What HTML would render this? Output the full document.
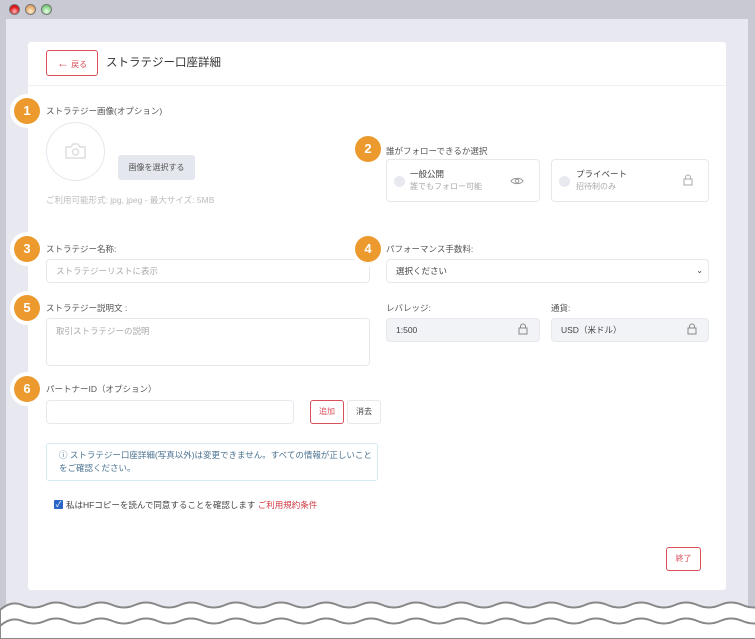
<!DOCTYPE html>
<html><head><meta charset="utf-8"><style>
*{box-sizing:border-box;margin:0;padding:0}
body{width:755px;height:639px;overflow:hidden;background:#fff;font-family:"Liberation Sans","Noto Sans CJK JP",sans-serif;position:relative;color:#333}
.frame{position:absolute;left:0;top:0;width:755px;height:615px;background:#c9c9d3}
.inner{position:absolute;left:6px;top:19px;width:742px;height:600px;background:#e8e8f1}
.dot{position:absolute;top:4px;width:11px;height:11px;border-radius:50%;border:1px solid #777}
.card{position:absolute;left:28px;top:42px;width:698px;height:548px;background:#fff;border-radius:3px}
.hdr{position:absolute;left:0;top:0;width:698px;height:44px;border-bottom:1px solid #f0f0f4}
.abs{position:absolute}
.lbl{position:absolute;font-size:8.5px;color:#555}
.badge{position:absolute;width:26px;height:26px;border-radius:50%;background:#ec9a2e;color:#fff;font-weight:bold;font-size:13px;text-align:center;line-height:26px;box-shadow:0 0 0 4px #fff}
.inp{position:absolute;border:1px solid #e6e8ee;border-radius:4px;background:#fff;font-size:8.5px;color:#aaa;padding-left:9px}
.ro{background:#f1f3f7;color:#444}
</style></head><body>
<div class="frame"></div>
<div class="dot" style="left:9px;background:radial-gradient(circle at 50% 70%,#fbb,#d11 60%)"></div>
<div class="dot" style="left:25px;background:radial-gradient(circle at 50% 70%,#fff0d0,#e0a060 70%)"></div>
<div class="dot" style="left:41px;background:radial-gradient(circle at 50% 70%,#efe,#7c7 70%)"></div>
<div class="inner"></div>
<div class="card">
 <div class="hdr">
  <div class="abs" style="left:18px;top:8px;width:52px;height:26px;border:1px solid #d9505a;border-radius:3px;font-size:8px;color:#d9505a;line-height:24px;text-align:center"><span style="font-size:12px">&larr;</span> 戻る</div>
  <div class="abs" style="left:78px;top:12px;font-size:11.5px;color:#333">ストラテジー口座詳細</div>
 </div>
</div>
<div class="badge" style="left:14px;top:98px">1</div>
<div class="lbl" style="left:46px;top:105px">ストラテジー画像(オプション)</div>
<div class="abs" style="left:46px;top:122px;width:59px;height:59px;border:1px solid #e6e6ee;border-radius:50%"></div>
<svg class="abs" style="left:65px;top:143px" width="21" height="16" viewBox="0 0 21 16"><path d="M1 4h5l2-3h5l2 3h5v11H1z" fill="none" stroke="#ddd" stroke-width="1.5"/><circle cx="10.5" cy="9" r="3" fill="none" stroke="#ddd" stroke-width="1.5"/></svg>
<div class="abs" style="left:118px;top:155px;width:77px;height:25px;background:#e5e7ef;border-radius:3px;font-size:8px;color:#555;text-align:center;line-height:25px">画像を選択する</div>
<div class="lbl" style="left:46px;top:194px;color:#bbb">ご利用可能形式: jpg, jpeg - 最大サイズ: 5MB</div>

<div class="badge" style="left:355px;top:136px">2</div>
<div class="lbl" style="left:386px;top:145px">誰がフォローできるか選択</div>
<div class="inp" style="left:386px;top:159px;width:154px;height:43px"></div>
<div class="abs" style="left:394px;top:176px;width:11px;height:11px;border-radius:50%;background:#e8e9f0"></div>
<div class="abs" style="left:410px;top:168px;font-size:8.5px;color:#444">一般公開</div>
<div class="abs" style="left:410px;top:181px;font-size:8px;color:#aaa">誰でもフォロー可能</div>
<svg class="abs" style="left:510px;top:176px" width="14" height="10" viewBox="0 0 14 10"><path d="M1 5C3 1.5 11 1.5 13 5C11 8.5 3 8.5 1 5z" fill="none" stroke="#999"/><circle cx="7" cy="5" r="1.8" fill="none" stroke="#999"/></svg>
<div class="inp" style="left:551px;top:159px;width:158px;height:43px"></div>
<div class="abs" style="left:559px;top:176px;width:11px;height:11px;border-radius:50%;background:#e8e9f0"></div>
<div class="abs" style="left:576px;top:168px;font-size:8.5px;color:#444">プライベート</div>
<div class="abs" style="left:576px;top:181px;font-size:8px;color:#aaa">招待制のみ</div>
<svg class="abs" style="left:683px;top:174px" width="10" height="12" viewBox="0 0 10 12"><path d="M2.5 5V3.5a2.5 2.5 0 0 1 5 0V5" fill="none" stroke="#aaa"/><rect x="1" y="5" width="8" height="6" fill="none" stroke="#aaa"/></svg>

<div class="badge" style="left:14px;top:236px">3</div>
<div class="lbl" style="left:46px;top:243px">ストラテジー名称:</div>
<div class="inp" style="left:46px;top:259px;width:324px;height:24px;line-height:22px">ストラテジーリストに表示</div>
<div class="badge" style="left:355px;top:236px">4</div>
<div class="lbl" style="left:386px;top:243px">パフォーマンス手数料:</div>
<div class="inp" style="left:386px;top:259px;width:323px;height:24px;line-height:22px;color:#444">選択ください<span style="position:absolute;right:5px;font-size:8px">&#8964;</span></div>

<div class="badge" style="left:14px;top:295px">5</div>
<div class="lbl" style="left:46px;top:302px">ストラテジー説明文 :</div>
<div class="inp" style="left:46px;top:318px;width:324px;height:48px;padding-top:6px">取引ストラテジーの説明</div>
<div class="lbl" style="left:386px;top:302px">レバレッジ:</div>
<div class="inp ro" style="left:386px;top:318px;width:154px;height:24px;line-height:22px">1:500</div>
<div class="lbl" style="left:551px;top:302px">通貨:</div>
<div class="inp ro" style="left:551px;top:318px;width:158px;height:24px;line-height:22px">USD（米ドル）</div>
<svg class="abs" style="left:518px;top:323px" width="10" height="12" viewBox="0 0 10 12"><path d="M2.5 5V3.5a2.5 2.5 0 0 1 5 0V5" fill="none" stroke="#888"/><rect x="1" y="5" width="8" height="6" fill="none" stroke="#888"/></svg>
<svg class="abs" style="left:687px;top:323px" width="10" height="12" viewBox="0 0 10 12"><path d="M2.5 5V3.5a2.5 2.5 0 0 1 5 0V5" fill="none" stroke="#888"/><rect x="1" y="5" width="8" height="6" fill="none" stroke="#888"/></svg>

<div class="badge" style="left:14px;top:376px">6</div>
<div class="lbl" style="left:46px;top:383px">パートナーID（オプション）</div>
<div class="inp" style="left:46px;top:400px;width:248px;height:24px"></div>
<div class="abs" style="left:310px;top:400px;width:34px;height:24px;border:1px solid #d9505a;border-radius:3px;font-size:8px;color:#d9505a;text-align:center;line-height:22px">追加</div>
<div class="abs" style="left:347px;top:400px;width:34px;height:24px;border:1px solid #e6e8ee;border-radius:3px;font-size:8px;color:#444;text-align:center;line-height:22px">消去</div>

<div class="abs" style="left:46px;top:443px;width:332px;height:38px;border:1px solid #d4ecf4;border-radius:3px;font-size:8.5px;color:#4a7290;padding:5px 0 0 12px;line-height:13px">ⓘ ストラテジー口座詳細(写真以外)は変更できません。すべての情報が正しいことをご確認ください。</div>
<div class="abs" style="left:54px;top:500px;width:9px;height:9px;background:#2a66c8;border-radius:1px;color:#fff;font-size:8px;line-height:9px;text-align:center">✓</div>
<div class="abs" style="left:66px;top:499px;font-size:8.5px;color:#444">私はHFコピーを読んで同意することを確認します <span style="color:#d13b45">ご利用規約条件</span></div>
<div class="abs" style="left:666px;top:547px;width:35px;height:24px;border:1px solid #d9505a;border-radius:3px;font-size:8px;color:#d9505a;text-align:center;line-height:22px">終了</div>

<svg class="abs" style="left:0;top:598px" width="755" height="41" viewBox="0 0 755 41">
<path d="M0 12 Q11 2 22.5 7 T45 7 T67.5 7 T90 7 T112.5 7 T135 7 T157.5 7 T180 7 T202.5 7 T225 7 T247.5 7 T270 7 T292.5 7 T315 7 T337.5 7 T360 7 T382.5 7 T405 7 T427.5 7 T450 7 T472.5 7 T495 7 T517.5 7 T540 7 T562.5 7 T585 7 T607.5 7 T630 7 T652.5 7 T675 7 T697.5 7 T720 7 T742.5 7 T765 7 V41 H0Z" fill="#fff" stroke="#888" stroke-width="2"/>
<path d="M0 28 Q11 18 22.5 23 T45 23 T67.5 23 T90 23 T112.5 23 T135 23 T157.5 23 T180 23 T202.5 23 T225 23 T247.5 23 T270 23 T292.5 23 T315 23 T337.5 23 T360 23 T382.5 23 T405 23 T427.5 23 T450 23 T472.5 23 T495 23 T517.5 23 T540 23 T562.5 23 T585 23 T607.5 23 T630 23 T652.5 23 T675 23 T697.5 23 T720 23 T742.5 23 T765 23" fill="none" stroke="#888" stroke-width="2"/>
</svg>
</body></html>
